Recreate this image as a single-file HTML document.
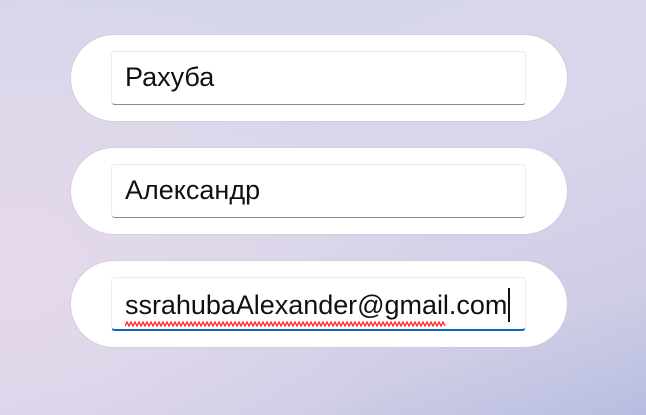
<!DOCTYPE html>
<html><head><meta charset="utf-8"><style>
html,body{margin:0;padding:0}
body{width:646px;height:415px;overflow:hidden;position:relative;
background:radial-gradient(ellipse 420px 300px at 0px 260px,#e6d9eb 0%,rgba(230,217,235,0) 100%),
linear-gradient(160deg,#d4d6ea 0%,#d9d6ea 50%,#cfcde6 80%,#b7bde0 100%);
font-family:"Liberation Sans",sans-serif}
.pill{position:absolute;left:71px;width:496px;height:86px;border-radius:43px;background:#fff;box-shadow:0 0 0 1px rgba(200,200,215,.5)}
.box{position:absolute;left:40px;top:16px;width:413px;height:52px;border:1px solid #ececec;border-bottom:1px solid #8a8a8a;border-radius:4px;background:#fff}
.t{position:absolute;left:13px;top:10px;font-size:27px;color:#111;white-space:nowrap}
.focus{border-bottom:2px solid #0a67c0;height:51px}
</style></head><body>
<div class="pill" style="top:35px"><div class="box"><div class="t">Рахуба</div></div></div>
<div class="pill" style="top:148px"><div class="box"><div class="t">Александр</div></div></div>
<div class="pill" style="top:261px"><div class="box focus"><div class="t" style="letter-spacing:-0.03px">ssrahubaAlexander@gmail.com<span style="display:inline-block;width:1.5px;height:34px;background:#111;vertical-align:-8px;margin-left:1px"></span><svg style="position:absolute;left:0;top:33px" width="322" height="7"><polyline fill="none" stroke="#ff2020" stroke-width="1.3" points="0,5 2,1 4,5 6,1 8,5 10,1 12,5 14,1 16,5 18,1 20,5 22,1 24,5 26,1 28,5 30,1 32,5 34,1 36,5 38,1 40,5 42,1 44,5 46,1 48,5 50,1 52,5 54,1 56,5 58,1 60,5 62,1 64,5 66,1 68,5 70,1 72,5 74,1 76,5 78,1 80,5 82,1 84,5 86,1 88,5 90,1 92,5 94,1 96,5 98,1 100,5 102,1 104,5 106,1 108,5 110,1 112,5 114,1 116,5 118,1 120,5 122,1 124,5 126,1 128,5 130,1 132,5 134,1 136,5 138,1 140,5 142,1 144,5 146,1 148,5 150,1 152,5 154,1 156,5 158,1 160,5 162,1 164,5 166,1 168,5 170,1 172,5 174,1 176,5 178,1 180,5 182,1 184,5 186,1 188,5 190,1 192,5 194,1 196,5 198,1 200,5 202,1 204,5 206,1 208,5 210,1 212,5 214,1 216,5 218,1 220,5 222,1 224,5 226,1 228,5 230,1 232,5 234,1 236,5 238,1 240,5 242,1 244,5 246,1 248,5 250,1 252,5 254,1 256,5 258,1 260,5 262,1 264,5 266,1 268,5 270,1 272,5 274,1 276,5 278,1 280,5 282,1 284,5 286,1 288,5 290,1 292,5 294,1 296,5 298,1 300,5 302,1 304,5 306,1 308,5 310,1 312,5 314,1 316,5 318,1 320,5"/></svg></div></div></div>
</body></html>
